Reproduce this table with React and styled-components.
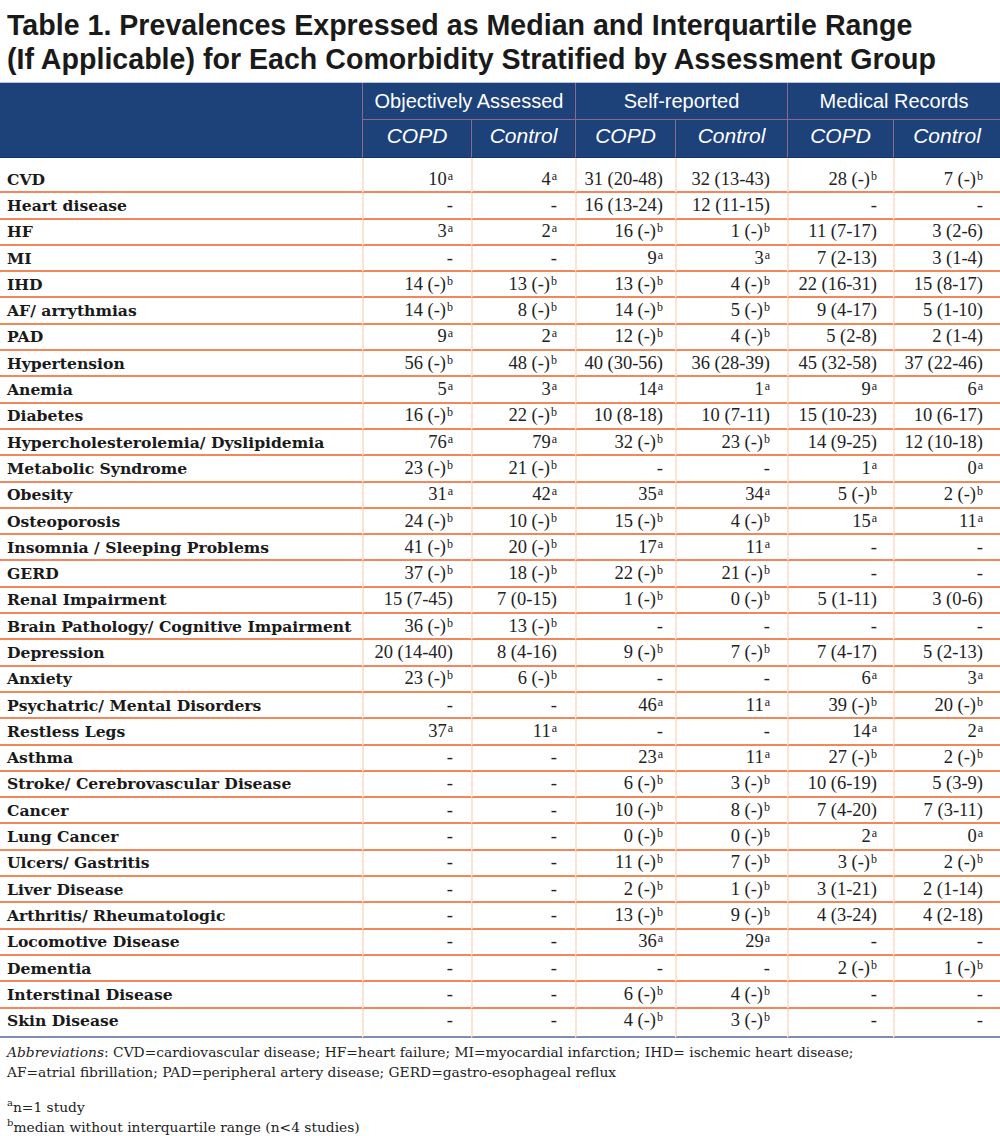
import React from 'react';
import styled, { createGlobalStyle } from 'styled-components';

const Global = createGlobalStyle`
  html, body { margin: 0; padding: 0; background: #fff; }
  body { width: 1000px; }
`;

const Page = styled.div`
  width: 1000px;
  background: #fff;
`;

const Title = styled.h1`
  margin: 0;
  box-sizing: border-box;
  height: 82px;
  padding: 8px 0 0 7px;
  font-family: "Liberation Sans", Arial, sans-serif;
  font-weight: 700;
  font-size: 28.6px;
  line-height: 34px;
  letter-spacing: 0;
  color: #1a1a1a;
  white-space: nowrap;
`;

const Table = styled.table`
  width: 1000px;
  table-layout: fixed;
  border-collapse: separate;
  border-spacing: 0;
  border-top: 1px solid #b9c5da;
`;

const HeadRow = styled.tr`
  background: #1d4179;
`;

const HeadBlank = styled.th`
  padding: 0;
  border-bottom: 1px solid #163566;
`;

const GroupTh = styled.th`
  box-sizing: border-box;
  height: 37px;
  padding: 0;
  border-left: 1px solid #8a6a8a;
  border-bottom: 1px solid #8a6a8a;
  font-family: "Liberation Sans", Arial, sans-serif;
  font-weight: 400;
  font-size: 20px;
  color: #fff;
  text-align: center;
  vertical-align: middle;
`;

const SubTh = styled.th`
  box-sizing: border-box;
  height: 38px;
  padding: 0 0 6px;
  border-left: 1px solid #8a6a8a;
  border-bottom: 1px solid #163566;
  font-family: "Liberation Sans", Arial, sans-serif;
  font-weight: 400;
  font-style: italic;
  font-size: 21px;
  color: #fff;
  text-align: center;
  vertical-align: middle;
`;

const BodyRow = styled.tr`
  background: #fff;
`;

const rowHeight = p => (p.$first ? '35.3px' : p.$last ? '29.3px' : '26.3px');

const LabelTd = styled.td`
  box-sizing: border-box;
  height: ${rowHeight};
  padding: ${p => (p.$first ? '9px 0 0 7px' : p.$last ? '0 0 3px 7px' : '0 0 0 7px')};
  border-bottom: 2px solid ${p => (p.$last ? '#7a8fb2' : '#f4875a')};
  font-family: "DejaVu Serif", "Liberation Serif", serif;
  font-weight: 700;
  font-size: 15.6px;
  color: #1a1a1a;
  white-space: nowrap;
  vertical-align: middle;
`;

const ValueTd = styled.td`
  box-sizing: border-box;
  height: ${rowHeight};
  padding: ${p => (p.$first ? `9px ${p.$pad}px 0 0` : p.$last ? `0 ${p.$pad}px 3px 0` : `0 ${p.$pad}px 0 0`)};
  border-left: 2px solid #fde3d1;
  border-bottom: 2px solid ${p => (p.$last ? '#7a8fb2' : '#f4875a')};
  font-family: "Liberation Serif", "Times New Roman", serif;
  font-weight: 400;
  font-size: 18.5px;
  color: #222;
  text-align: right;
  white-space: nowrap;
  vertical-align: middle;
`;

const Sup = styled.sup`
  font-size: 12px;
  line-height: 0;
  vertical-align: 5px;
  margin-left: 1px;
`;

const Footer = styled.div`
  padding: 4px 7px 8px;
  font-family: "DejaVu Serif", "Liberation Serif", serif;
  font-size: 13.8px;
  line-height: 20px;
  color: #222;
  white-space: nowrap;
`;

const FootPara = styled.p`
  margin: 0 0 ${p => (p.$gap ? '15px' : '0')};
`;

const FootSup = styled.sup`
  font-size: 10px;
  line-height: 0;
  vertical-align: 6px;
`;

const cols = [362, 109, 104, 100, 112, 106, 107];
const pads = [18, 18, 12, 17, 16, 17];

const rows = [
  ['CVD', ['10|a', '4|a', '31 (20-48)', '32 (13-43)', '28 (-)|b', '7 (-)|b']],
  ['Heart disease', ['-', '-', '16 (13-24)', '12 (11-15)', '-', '-']],
  ['HF', ['3|a', '2|a', '16 (-)|b', '1 (-)|b', '11 (7-17)', '3 (2-6)']],
  ['MI', ['-', '-', '9|a', '3|a', '7 (2-13)', '3 (1-4)']],
  ['IHD', ['14 (-)|b', '13 (-)|b', '13 (-)|b', '4 (-)|b', '22 (16-31)', '15 (8-17)']],
  ['AF/ arrythmias', ['14 (-)|b', '8 (-)|b', '14 (-)|b', '5 (-)|b', '9 (4-17)', '5 (1-10)']],
  ['PAD', ['9|a', '2|a', '12 (-)|b', '4 (-)|b', '5 (2-8)', '2 (1-4)']],
  ['Hypertension', ['56 (-)|b', '48 (-)|b', '40 (30-56)', '36 (28-39)', '45 (32-58)', '37 (22-46)']],
  ['Anemia', ['5|a', '3|a', '14|a', '1|a', '9|a', '6|a']],
  ['Diabetes', ['16 (-)|b', '22 (-)|b', '10 (8-18)', '10 (7-11)', '15 (10-23)', '10 (6-17)']],
  ['Hypercholesterolemia/ Dyslipidemia', ['76|a', '79|a', '32 (-)|b', '23 (-)|b', '14 (9-25)', '12 (10-18)']],
  ['Metabolic Syndrome', ['23 (-)|b', '21 (-)|b', '-', '-', '1|a', '0|a']],
  ['Obesity', ['31|a', '42|a', '35|a', '34|a', '5 (-)|b', '2 (-)|b']],
  ['Osteoporosis', ['24 (-)|b', '10 (-)|b', '15 (-)|b', '4 (-)|b', '15|a', '11|a']],
  ['Insomnia / Sleeping Problems', ['41 (-)|b', '20 (-)|b', '17|a', '11|a', '-', '-']],
  ['GERD', ['37 (-)|b', '18 (-)|b', '22 (-)|b', '21 (-)|b', '-', '-']],
  ['Renal Impairment', ['15 (7-45)', '7 (0-15)', '1 (-)|b', '0 (-)|b', '5 (1-11)', '3 (0-6)']],
  ['Brain Pathology/ Cognitive Impairment', ['36 (-)|b', '13 (-)|b', '-', '-', '-', '-']],
  ['Depression', ['20 (14-40)', '8 (4-16)', '9 (-)|b', '7 (-)|b', '7 (4-17)', '5 (2-13)']],
  ['Anxiety', ['23 (-)|b', '6 (-)|b', '-', '-', '6|a', '3|a']],
  ['Psychatric/ Mental Disorders', ['-', '-', '46|a', '11|a', '39 (-)|b', '20 (-)|b']],
  ['Restless Legs', ['37|a', '11|a', '-', '-', '14|a', '2|a']],
  ['Asthma', ['-', '-', '23|a', '11|a', '27 (-)|b', '2 (-)|b']],
  ['Stroke/ Cerebrovascular Disease', ['-', '-', '6 (-)|b', '3 (-)|b', '10 (6-19)', '5 (3-9)']],
  ['Cancer', ['-', '-', '10 (-)|b', '8 (-)|b', '7 (4-20)', '7 (3-11)']],
  ['Lung Cancer', ['-', '-', '0 (-)|b', '0 (-)|b', '2|a', '0|a']],
  ['Ulcers/ Gastritis', ['-', '-', '11 (-)|b', '7 (-)|b', '3 (-)|b', '2 (-)|b']],
  ['Liver Disease', ['-', '-', '2 (-)|b', '1 (-)|b', '3 (1-21)', '2 (1-14)']],
  ['Arthritis/ Rheumatologic', ['-', '-', '13 (-)|b', '9 (-)|b', '4 (3-24)', '4 (2-18)']],
  ['Locomotive Disease', ['-', '-', '36|a', '29|a', '-', '-']],
  ['Dementia', ['-', '-', '-', '-', '2 (-)|b', '1 (-)|b']],
  ['Interstinal Disease', ['-', '-', '6 (-)|b', '4 (-)|b', '-', '-']],
  ['Skin Disease', ['-', '-', '4 (-)|b', '3 (-)|b', '-', '-']],
];

function Value({ text }) {
  const [main, sup] = text.split('|');
  return (
    <>
      {main}
      {sup && <Sup>{sup}</Sup>}
    </>
  );
}

const groups = ['Objectively Assessed', 'Self-reported', 'Medical Records'];

export default function App() {
  return (
    <Page>
      <Global />
      <Title>
        Table 1. Prevalences Expressed as Median and Interquartile Range
        <br />
        (If Applicable) for Each Comorbidity Stratified by Assessment Group
      </Title>
      <Table>
        <colgroup>
          {cols.map((w, i) => (
            <col key={i} style={{ width: w }} />
          ))}
        </colgroup>
        <thead>
          <HeadRow>
            <HeadBlank rowSpan={2} />
            {groups.map(g => (
              <GroupTh key={g} colSpan={2}>
                {g}
              </GroupTh>
            ))}
          </HeadRow>
          <HeadRow>
            {groups.map(g => (
              <React.Fragment key={g}>
                <SubTh>COPD</SubTh>
                <SubTh>Control</SubTh>
              </React.Fragment>
            ))}
          </HeadRow>
        </thead>
        <tbody>
          {rows.map(([label, vals], ri) => {
            const first = ri === 0;
            const last = ri === rows.length - 1;
            return (
              <BodyRow key={label}>
                <LabelTd $first={first} $last={last}>
                  {label}
                </LabelTd>
                {vals.map((v, ci) => (
                  <ValueTd key={ci} $first={first} $last={last} $pad={pads[ci]}>
                    <Value text={v} />
                  </ValueTd>
                ))}
              </BodyRow>
            );
          })}
        </tbody>
      </Table>
      <Footer>
        <FootPara $gap>
          <em>Abbreviations</em>: CVD=cardiovascular disease; HF=heart failure; MI=myocardial infarction; IHD= ischemic heart disease;
          <br />
          AF=atrial fibrillation; PAD=peripheral artery disease; GERD=gastro-esophageal reflux
        </FootPara>
        <FootPara>
          <FootSup>a</FootSup>n=1 study
          <br />
          <FootSup>b</FootSup>median without interquartile range (n&lt;4 studies)
        </FootPara>
      </Footer>
    </Page>
  );
}
